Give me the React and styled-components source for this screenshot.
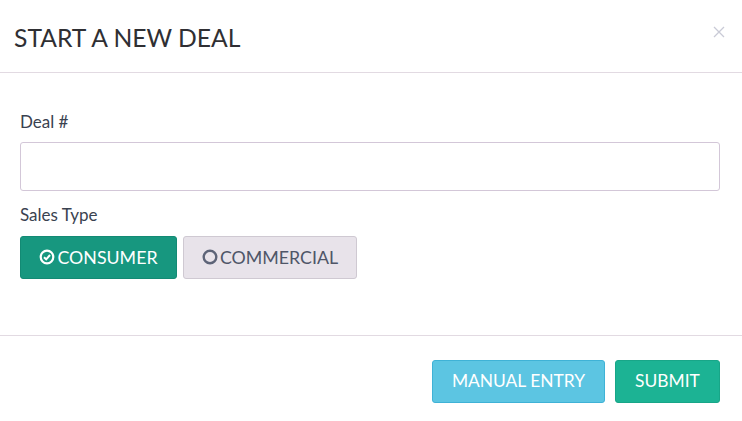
import React from "react";
import styled, { createGlobalStyle } from "styled-components";

const Global = createGlobalStyle`
  html, body { margin: 0; padding: 0; background: #fff; }
  body { font-family: Lato, "Open Sans", sans-serif; }
  * { box-sizing: border-box; }
`;

const Modal = styled.div`
  width: 742px;
  height: 421px;
  background: #fff;
  display: flex;
  flex-direction: column;
`;

const Header = styled.div`
  height: 73px;
  padding: 0 16px 0 14px;
  display: flex;
  align-items: center;
  justify-content: space-between;
  border-bottom: 1px solid #e2dae2;
`;

const Title = styled.h4`
  margin: 0;
  font-size: 24.7px;
  font-weight: 400;
  color: #2f2f33;
  padding-top: 2px;
`;

const Close = styled.button`
  border: 0;
  background: none;
  padding: 0;
  width: 14px;
  height: 14px;
  margin-top: -8px;
  display: flex;
  align-items: center;
  justify-content: center;
`;

const Body = styled.div`
  padding: 39px 22px 0 20px;
  height: 263px;
  border-bottom: 1px solid #e2dae2;
`;

const Label = styled.label`
  display: block;
  font-size: 17px;
  color: #3a4250;
  line-height: 20px;
  margin-bottom: ${(p) => p.$mb}px;
`;

const Input = styled.input`
  display: block;
  width: 100%;
  height: 49px;
  border: 1px solid #d3c7d8;
  border-radius: 3px;
  margin-bottom: 14px;
  outline: none;
`;

const Toggle = styled.div`
  display: flex;
  gap: 6px;
`;

const Btn = styled.button`
  height: 43px;
  width: ${(p) => p.$w}px;
  padding: 0 0 2px 0;
  border-radius: 3px;
  font-family: Lato, sans-serif;
  font-size: ${(p) => p.$fs || 17}px;
  text-transform: uppercase;
  display: inline-flex;
  align-items: center;
  justify-content: center;
  gap: 2px;
  cursor: pointer;
  background: ${(p) => p.$bg};
  border: 1px solid ${(p) => p.$border};
  color: ${(p) => p.$color};
`;

const Footer = styled.div`
  flex: 1;
  padding: 24px 22px 0 0;
  display: flex;
  justify-content: flex-end;
  align-items: flex-start;
  gap: 10px;
`;

const CheckIcon = () => (
  <svg width="16" height="16" viewBox="0 0 16 16">
    <circle cx="8" cy="8" r="6.3" fill="none" stroke="#fff" strokeWidth="2.2" />
    <path d="M5 8.2 L7.2 10.3 L11 6" fill="none" stroke="#fff" strokeWidth="2" />
  </svg>
);

const CircleIcon = () => (
  <svg width="16" height="16" viewBox="0 0 16 16">
    <circle cx="8" cy="8" r="6.3" fill="none" stroke="#5d6478" strokeWidth="2.4" />
  </svg>
);

export default function App() {
  return (
    <>
      <Global />
      <Modal>
        <Header>
          <Title>START A NEW DEAL</Title>
          <Close aria-label="close">
            <svg width="12" height="12" viewBox="0 0 12 12">
              <path d="M1 1 L11 11 M11 1 L1 11" stroke="#c9cad6" strokeWidth="1.3" />
            </svg>
          </Close>
        </Header>
        <Body>
          <Label $mb={10}>Deal #</Label>
          <Input />
          <Label $mb={11}>Sales Type</Label>
          <Toggle>
            <Btn $w={157} $fs={17.8} $bg="#17977f" $border="#138a74" $color="#fff">
              <CheckIcon />CONSUMER
            </Btn>
            <Btn $w={174} $fs={17.8} $bg="#e8e3ea" $border="#cfc9d2" $color="#4f5668">
              <CircleIcon />COMMERCIAL
            </Btn>
          </Toggle>
        </Body>
        <Footer>
          <Btn $w={173} $fs={17.4} $bg="#5cc5e2" $border="#3fb2d6" $color="#fff">
            MANUAL ENTRY
          </Btn>
          <Btn $w={105} $fs={17.4} $bg="#1cb394" $border="#18a688" $color="#fff">
            SUBMIT
          </Btn>
        </Footer>
      </Modal>
    </>
  );
}
